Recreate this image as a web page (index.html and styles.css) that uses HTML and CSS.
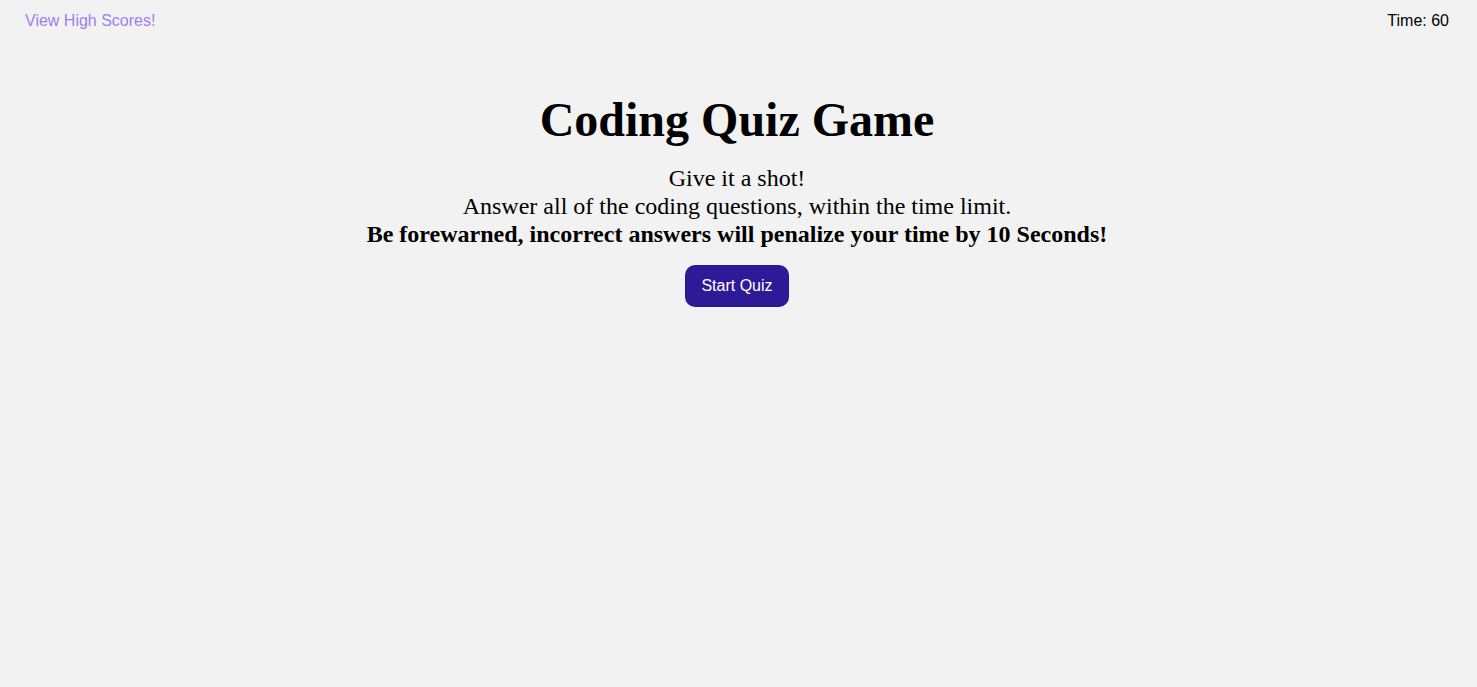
FILE: index.html
```html
<!DOCTYPE html>
<html>
<head>
<meta charset="utf-8">
<title>Coding Quiz Game</title>
<link rel="stylesheet" href="styles.css">
</head>
<body>
<header class="top-bar">
  <a class="scores-link" href="#">View High Scores!</a>
  <div class="timer">Time: 60</div>
</header>
<main class="intro">
  <h1 class="title">Coding Quiz Game</h1>
  <p class="desc">Give it a shot!<br>Answer all of the coding questions, within the time limit.<br><strong>Be forewarned, incorrect answers will penalize your time by 10 Seconds!</strong></p>
  <button class="start-btn">Start Quiz</button>
</main>
</body>
</html>
```
FILE: styles.css
```css
html, body {
  margin: 0;
  padding: 0;
  background: #f2f2f2;
  height: 100%;
}
body {
  font-family: "Liberation Serif", "Times New Roman", serif;
  color: #000;
}
.top-bar {
  display: flex;
  justify-content: space-between;
  align-items: center;
  padding: 12px 28px 0 25px;
  font-family: "Liberation Sans", Arial, sans-serif;
  font-size: 16px;
  line-height: 18px;
}
.scores-link {
  color: #9b80f2;
  text-decoration: none;
}
.timer {
  color: #000;
}
.intro {
  display: flex;
  flex-direction: column;
  align-items: center;
  text-align: center;
  padding: 62px 3px 0 0;
}
.title {
  margin: 0;
  font-size: 48px;
  line-height: 55px;
  font-weight: bold;
}
.desc {
  margin: 17px 0 0;
  font-size: 24px;
  line-height: 28px;
}
.start-btn {
  margin-top: 17px;
  background: #2e1a96;
  color: #fff;
  border: none;
  border-radius: 10px;
  font-family: "Liberation Sans", Arial, sans-serif;
  font-size: 16px;
  width: 104px;
  height: 42px;
  padding: 0;
}
```
